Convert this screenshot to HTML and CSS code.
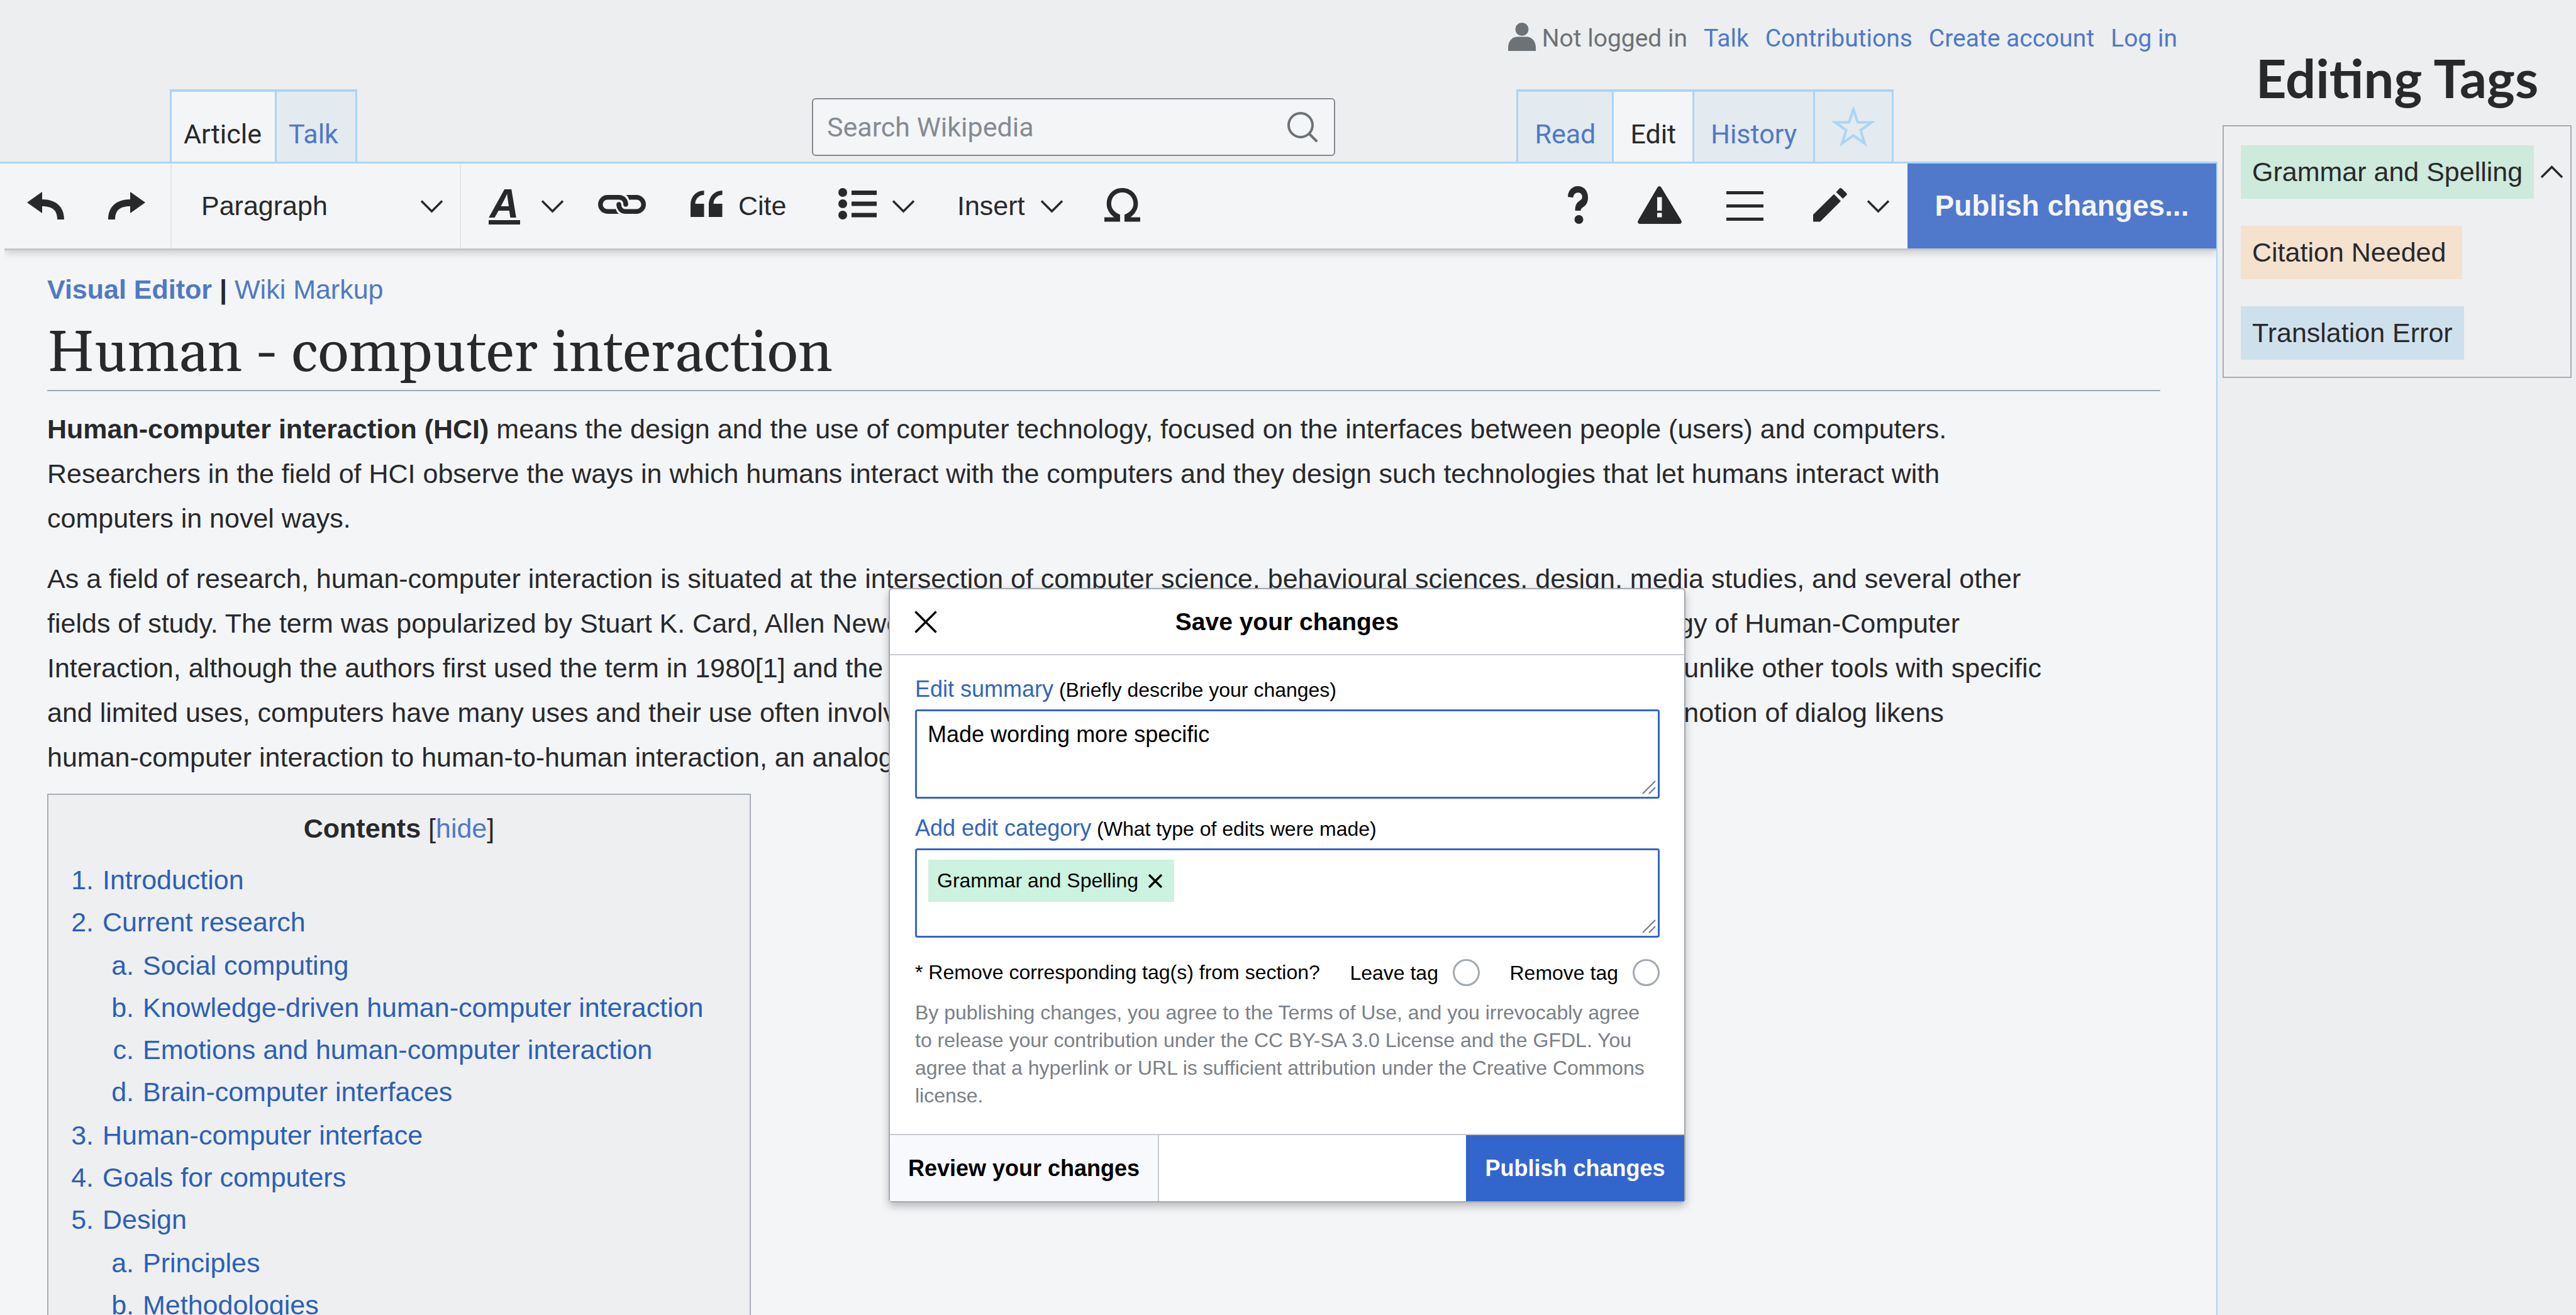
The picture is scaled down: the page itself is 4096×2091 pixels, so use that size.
FILE: index.html
```html
<!DOCTYPE html>
<html lang="en">
<head>
<meta charset="utf-8">
<title>Human - computer interaction</title>
<link rel="stylesheet" href="styles.css">
</head>
<body>
<svg width="0" height="0" class="sprite" aria-hidden="true">
  <symbol id="chevron" viewBox="0 0 35 64"><path d="M1 23.5L17.5 40L34 23.5" fill="none" stroke="currentColor" stroke-width="3.4"/></symbol>
  <symbol id="cross" viewBox="0 0 36 36"><path d="M1.5 1.5L34.500 34.500M34.500 1.500L1.500 34.500" fill="none" stroke="currentColor" stroke-width="3.4"/></symbol>
  <symbol id="grip" viewBox="0 0 22 22"><path d="M1 21L21 1M11 21L21 11" fill="none" stroke="#72777d" stroke-width="2"/></symbol>
</svg>

<div class="page">
  <div class="wiki">
    <header class="header">
      <nav class="user-nav" aria-label="Personal tools">
        <span class="user-state">
          <svg class="icon-user" width="44" height="50" viewBox="0 0 44 50" fill="currentColor"><ellipse cx="22" cy="10.500" rx="10.500" ry="10.500"/><path d="M0 45V40C0 31 5 23 14 22.500H30C39 23 44 31 44 40V45Z"/></svg>
          Not logged in
        </span>
        <a href="#">Talk</a>
        <a href="#">Contributions</a>
        <a href="#">Create account</a>
        <a href="#">Log in</a>
      </nav>
      <div class="tab-row">
        <nav class="tabs namespaces" aria-label="Namespaces">
          <a class="tab selected" href="#">Article</a>
          <a class="tab" href="#">Talk</a>
        </nav>
        <form class="search" role="search">
          <input type="search" aria-label="Search Wikipedia" placeholder="Search Wikipedia">
          <button type="button" aria-label="Search">
            <svg width="48" height="48" viewBox="0 0 48 48" fill="none" stroke="currentColor" stroke-width="4"><circle cx="21" cy="21" r="19"/><path d="M35 35L46 46" stroke-linecap="round"/></svg>
          </button>
        </form>
        <nav class="tabs views" aria-label="Views">
          <a class="tab" href="#">Read</a>
          <a class="tab selected" href="#">Edit</a>
          <a class="tab" href="#">History</a>
          <a class="tab star" href="#" aria-label="Watch">
            <svg width="68" height="64" viewBox="0 0 68 64"><path d="M34 5L41 25.500H63L45.500 38L52 59L34 46.500L16 59L22.500 38L5 25.500H27Z" fill="none" stroke="#abd5f3" stroke-width="4"/></svg>
          </a>
        </nav>
      </div>
    </header>

    <div class="workspace">
      <div class="toolbar" role="toolbar" aria-label="Editing">
        <div class="history">
          <button type="button" aria-label="Undo"><svg width="59" height="64" viewBox="0 0 59 64" fill="currentColor"><path d="M0 26L24 9V21C46 21 59 33 59 53H48C48 38 40 32 24 32V43Z"/></svg></button>
          <button type="button" aria-label="Redo"><svg width="59" height="64" viewBox="0 0 59 64" fill="currentColor"><path d="M59 26L35 9V21C13 21 0 33 0 53H11C11 38 19 32 35 32V43Z"/></svg></button>
        </div>
        <label class="format">
          <select aria-label="Paragraph format"><option>Paragraph</option><option>Heading</option></select>
          <svg width="35" height="64"><use href="#chevron"/></svg>
        </label>
        <div class="tools">
          <button type="button" class="text-style" aria-label="Text style"><span class="style-letter">A</span><svg width="35" height="64"><use href="#chevron"/></svg></button>
          <button type="button" aria-label="Link"><svg width="76" height="64" viewBox="0 0 76 64" fill="currentColor"><g fill="none" stroke="currentColor" stroke-width="7.400"><path d="M28 40.300H15A11.300 11.300 0 0 1 15 17.700H33C40 17.700 44 23 44 29"/><path d="M49.500 17.700H61A11.300 11.300 0 0 1 61 40.300H44C37 40.300 33 35 33 29"/></g><circle cx="44" cy="29" r="3.700"/><circle cx="33" cy="29" r="3.700"/><path d="M44.500 14H50.500V21.400H49.500Q48 16.500 44.500 14ZM27 36.600H28Q29.500 41.500 33 44H27Z"/></svg></button>
          <button type="button"><svg width="51" height="64" viewBox="0 0 51 64" fill="currentColor"><path d="M0 49V28A21.500 21.500 0 0 1 21.500 7V14A14 14 0 0 0 7.500 28H21.500V49ZM29 49V28A21.500 21.500 0 0 1 50.500 7V14A14 14 0 0 0 36.500 28H50.500V49Z"/></svg>Cite</button>
          <button type="button" aria-label="Lists"><svg width="61" height="64" viewBox="0 0 61 64" fill="currentColor"><circle cx="7" cy="10" r="7"/><circle cx="7" cy="28" r="7"/><circle cx="7" cy="46" r="7"/><path d="M21 7H61V14H21ZM21 24.500H61V31.500H21ZM21 42.500H61V49.500H21Z"/></svg><svg width="35" height="64"><use href="#chevron"/></svg></button>
          <button type="button">Insert<svg width="35" height="64"><use href="#chevron"/></svg></button>
          <button type="button" aria-label="Special character"><svg width="57" height="64" viewBox="0 0 57 64" fill="currentColor"><path d="M25 56.500H0V49.400H15.500C8 44 3.700 36.500 3.700 28C3.700 13.500 14.500 3 28.500 3S53.400 13.500 53.400 28C53.400 36.500 49 44 41.500 49.400H57V56.500H32V45.300C40.500 42 46.300 36 46.300 28C46.300 17.500 38.500 10 28.500 10S10.900 17.500 10.900 28C10.900 36 16.500 42 25 45.300Z"/></svg></button>
        </div>
        <div class="page-tools">
          <button type="button" aria-label="Help"><svg width="33" height="64" viewBox="0 0 33 64" fill="currentColor"><path d="M0 17C0 7 7 0 16 0C26 0 32 8 32 18C32 26 29 30 25 33C22 35 20.400 36 20.400 39H11.600C11.600 31 13 27 19 23C22 21 22.800 19.500 22.800 17C22.800 13 20 10.300 16 10.300C12 10.300 9 13 8.400 18.300Z"/><circle cx="17.500" cy="53" r="7"/></svg></button>
          <button type="button" aria-label="Notices"><svg width="70" height="64" viewBox="0 0 70 64" fill="currentColor" fill-rule="evenodd"><path d="M31.500 2Q34.500 -2 37.500 2L69.500 55Q71 60 66 60H4Q-1 60 .500 55ZM31 17.500V39H38.500V17.500ZM31 42.500V49.500H38.500V42.500Z"/></svg></button>
          <button type="button" aria-label="Page options"><svg width="59" height="64" viewBox="0 0 59 64" fill="currentColor"><path d="M0 8H59V13H0ZM0 29H59V34H0ZM0 50H59V55H0Z"/></svg></button>
          <button type="button" class="mode" aria-label="Editing mode"><svg width="54" height="64" viewBox="0 0 54 64" fill="currentColor"><path d="M0 56.500V45.300L33 12.700L44 23.700L11.200 56.500ZM36.600 9.400L41.500 4Q43.600 2 45.700 4L53 11Q54.500 12.700 53 14.500L47.300 20.100Z"/></svg><svg width="35" height="64"><use href="#chevron"/></svg></button>
        </div>
        <button type="button" class="publish">Publish changes...</button>
      </div>

      <main class="article">
        <p class="mode-switch"><a href="#"><b>Visual Editor</b></a> <b>|</b> <a href="#">Wiki Markup</a></p>
        <h1>Human - computer interaction</h1>
        <p><b>Human-computer interaction (HCI)</b> means the design and the use of computer technology, focused on the interfaces between people (users) and computers.<br>
        Researchers in the field of HCI observe the ways in which humans interact with the computers and they design such technologies that let humans interact with<br>
        computers in novel ways.</p>
        <p>As a field of research, human-computer interaction is situated at the intersection of computer science, behavioural sciences, design, media studies, and several other<br>
        fields of study. The term was popularized by Stuart K. Card, Allen Newell and Thomas P. Moran in their seminal 1983 book The Psychology of Human-Computer<br>
        Interaction, although the authors first used the term in 1980[1] and the first known published use was in 1975.[2] The term connotes that, unlike other tools with specific<br>
        and limited uses, computers have many uses and their use often involves an open-ended dialog between the user and its computer. The notion of dialog likens<br>
        human-computer interaction to human-to-human interaction, an analogy which is crucial to theoretical considerations.</p>

        <nav class="toc" aria-labelledby="toc-title">
          <p class="toc-title"><b id="toc-title">Contents</b> [<a href="#">hide</a>]</p>
          <ol>
            <li><a href="#">Introduction</a></li>
            <li><a href="#">Current research</a>
              <ol>
                <li><a href="#">Social computing</a></li>
                <li><a href="#">Knowledge-driven human-computer interaction</a></li>
                <li><a href="#">Emotions and human-computer interaction</a></li>
                <li><a href="#">Brain-computer interfaces</a></li>
              </ol>
            </li>
            <li><a href="#">Human-computer interface</a></li>
            <li><a href="#">Goals for computers</a></li>
            <li><a href="#">Design</a>
              <ol>
                <li><a href="#">Principles</a></li>
                <li><a href="#">Methodologies</a></li>
              </ol>
            </li>
          </ol>
        </nav>
      </main>
    </div>
  </div>

  <aside class="sidebar">
    <h2>Editing Tags</h2>
    <ul class="tag-list">
      <li><span class="tag green">Grammar and Spelling</span><button type="button" aria-label="Collapse"><svg class="up" width="35" height="64" viewBox="0 0 35 64"><path d="M1 40L17.500 23.500L34 40" fill="none" stroke="currentColor" stroke-width="3.400"/></svg></button></li>
      <li><span class="tag orange">Citation Needed</span></li>
      <li><span class="tag blue">Translation Error</span></li>
    </ul>
  </aside>
</div>

<form class="dialog" role="dialog" aria-labelledby="dialog-title">
  <header class="dialog-head">
    <button type="button" aria-label="Close"><svg width="36" height="36"><use href="#cross"/></svg></button>
    <h2 id="dialog-title">Save your changes</h2>
  </header>
  <div class="dialog-body">
    <label class="field-label" for="summary"><a href="#">Edit summary</a> (Briefly describe your changes)</label>
    <div class="field">
      <textarea id="summary">Made wording more specific</textarea>
      <svg class="grip" width="22" height="22"><use href="#grip"/></svg>
    </div>
    <label class="field-label" for="category"><a href="#">Add edit category</a> (What type of edits were made)</label>
    <div class="field chips">
      <span class="chip">Grammar and Spelling<button type="button" aria-label="Remove Grammar and Spelling"><svg width="24" height="24" viewBox="0 0 24 24"><path d="M2 2L22 22M22 2L2 22" fill="none" stroke="currentColor" stroke-width="3.500"/></svg></button></span>
      <input id="category" type="text">
      <svg class="grip" width="22" height="22"><use href="#grip"/></svg>
    </div>
    <div class="choices" role="radiogroup" aria-labelledby="choice-title">
      <span id="choice-title">* Remove corresponding tag(s) from section?</span>
      <label>Leave tag <input type="radio" name="tag"></label>
      <label>Remove tag <input type="radio" name="tag"></label>
    </div>
    <p class="legal">By publishing changes, you agree to the Terms of Use, and you irrevocably agree to release your contribution under the CC BY-SA 3.0 License and the GFDL. You agree that a hyperlink or URL is sufficient attribution under the Creative Commons license.</p>
  </div>
  <footer class="dialog-foot">
    <button type="button" class="review">Review your changes</button>
    <button type="submit" class="confirm">Publish changes</button>
  </footer>
</form>
</body>
</html>
```
FILE: styles.css
```css
* { box-sizing: border-box; }

html, body { height: 100%; }

body {
  margin: 0;
  overflow: hidden;
  background: #eceef0;
  color: #28292b;
  font: 43px/71px "Liberation Sans", Arial, sans-serif;
}

a { color: #4f79c5; text-decoration: none; }
p, h1, h2, ol, ul { margin: 0; padding: 0; }
svg { display: block; flex: none; }
.sprite { position: absolute; }

button {
  display: flex;
  align-items: center;
  padding: 0;
  border: 0;
  background: none;
  color: inherit;
  font: inherit;
}

.page { display: flex; min-height: 100%; }
.wiki { flex: 1; min-width: 0; display: flex; flex-direction: column; }

/* Header */
.header { padding-top: 36px; font-family: Roboto, sans-serif; }

.user-nav {
  display: flex;
  justify-content: flex-end;
  gap: 26px;
  padding-right: 64px;
  font-size: 39px;
  line-height: 50px;
}
.user-state { display: flex; gap: 10px; color: #6d7276; }

.tab-row {
  display: flex;
  height: 115px;
  margin-top: 56px;
  padding: 0 515px 0 270px;
}
.tabs {
  display: flex;
  border-top: 4px solid #abd5f3;
  border-left: 3px solid #abd5f3;
}
.tab {
  display: flex;
  align-items: flex-end;
  padding: 0 26px 19px;
  border-right: 3px solid #abd5f3;
  background: #e3eaf0;
  line-height: 50px;
}
.tab.selected { background: #f4f5f7; color: #28292b; }
.namespaces .tab { padding: 0 21px 19px 19px; }
.namespaces .tab:last-child { padding-right: 27px; }
.views { margin-left: auto; }
.tab.star { padding: 0 27px 24px; }

.search {
  display: flex;
  align-items: center;
  align-self: flex-end;
  width: 832px;
  height: 92px;
  margin: 0 0 9px 723px;
  padding: 0 26px 0 22px;
  border: 2px solid #83898f;
  border-radius: 6px;
  background: #f4f5f7;
  color: #6d7276;
}
.search input {
  flex: 1;
  min-width: 0;
  padding: 0;
  border: 0;
  outline: 0;
  background: none;
  font: inherit;
  line-height: 50px;
}
.search input::placeholder { color: #858b92; opacity: 1; }

/* Editing area */
.workspace {
  flex: 1;
  border-top: 3px solid #abd5f3;
  border-right: 2px solid #abd5f3;
  background: #f4f5f7;
}

.toolbar {
  display: flex;
  align-items: stretch;
  height: 135px;
  margin-left: 7px;
  box-shadow: 0 3px 0 #c4c6cb, 0 6px 14px rgba(0, 0, 0, .2);
  clip-path: inset(0 0 -30px 0);
}
.history { display: flex; gap: 70px; width: 264px; padding-left: 36px; }
.format {
  display: flex;
  align-items: center;
  width: 462px;
  padding: 0 27px 0 47px;
  border: solid #e3e5ea;
  border-width: 0 2px;
}
.format select {
  flex: 1;
  padding: 0;
  border: 0;
  outline: 0;
  appearance: none;
  background: none;
  color: inherit;
  font: inherit;
}
.tools {
  display: grid;
  grid-template-columns: 174px 147px 235px 189px 234px 57px;
  margin-left: 44px;
}
.tools button { gap: 25px; }
.tools .text-style { gap: 34px; }
.style-letter {
  width: 50px;
  border-bottom: 7px solid #28292b;
  font-size: 65px;
  font-weight: bold;
  font-style: italic;
  line-height: 52px;
}
.page-tools {
  display: grid;
  grid-template-columns: 111px 141px 138px 121px;
  margin: 0 29px 0 auto;
}
.mode { justify-content: space-between; }
.publish {
  justify-content: center;
  width: 491px;
  background: #5079cc;
  color: #f4f5f7;
  font-size: 46px;
  font-weight: bold;
}

.article { padding: 30px 89px 40px 75px; }
.article > p { margin-top: 25px; }
.article > .mode-switch { margin-top: 0; }
h1 {
  margin-top: 10px;
  border-bottom: 2px solid #a2a9b1;
  font: 92px/114px Gelasio, Georgia, "Liberation Serif", serif;
}

.toc {
  width: 1119px;
  margin-top: 22px;
  padding: 20px 40px 40px 84px;
  border: 2px solid #a9adb5;
  background: #eeeff1;
  line-height: 67px;
}
.toc-title { margin: 0 0 15px -44px; text-align: center; }
.toc li, .toc li a { color: #2b60b7; }
.toc li a { padding-left: 2px; }
.toc ol ol { margin: 2px 0; padding-left: 64px; list-style: lower-alpha; }

/* Sidebar */
.sidebar { width: 570px; padding: 72px 7px 0 8px; }
.sidebar h2 {
  margin-bottom: 25px;
  font: bold 85px/102px Lato, sans-serif;
  text-align: center;
}
.tag-list {
  display: grid;
  gap: 43px;
  padding: 30px 0 27px 27px;
  border: 2px solid #a5adb5;
  background: #eeeff1;
  list-style: none;
}
.tag-list li { display: flex; align-items: center; gap: 11px; }
.tag { min-width: 352px; padding: 0 18px; line-height: 85px; white-space: nowrap; }
.green { background: #cdeadc; }
.orange { background: #f4e1ce; }
.blue { background: #cfe0ed; }

/* Save dialog */
.dialog {
  position: absolute;
  top: 935px;
  left: calc(50% - 635px);
  width: 1267px;
  border: 2px solid #a2a9b1;
  border-radius: 6px;
  background: #fff;
  box-shadow: 0 6px 14px rgba(0, 0, 0, .25);
  color: #000;
  font-size: 32px;
}
.dialog a { color: #3366bb; }
.dialog-head {
  display: grid;
  grid-template-columns: 36px 1fr 36px;
  align-items: center;
  height: 105px;
  padding: 0 39px;
  border-bottom: 2px solid #c8ccd1;
}
.dialog-head h2 { font-size: 39px; line-height: 48px; text-align: center; }
.dialog-body { padding: 30px 39px 39px 40px; }
.field-label { display: block; line-height: 48px; }
.field-label a { font-size: 36px; }
.field {
  position: relative;
  height: 142px;
  margin: 7px 0 23px;
  border: 3px solid #3366cc;
  border-radius: 4px;
}
.field textarea {
  display: block;
  width: 100%;
  height: 100%;
  padding: 16px 17px;
  border: 0;
  outline: 0;
  resize: none;
  background: none;
  color: inherit;
  font: 36px/42px "Liberation Sans", Arial, sans-serif;
}
.grip { position: absolute; right: 3px; bottom: 4px; }
.chips { display: flex; align-items: flex-start; margin-bottom: 34px; padding: 15px 18px; }
.chip {
  display: flex;
  align-items: center;
  gap: 15px;
  padding: 0 18px 0 14px;
  background: #ccf2e0;
  line-height: 67px;
}
.chips input { flex: 1; min-width: 0; height: 67px; border: 0; outline: 0; background: none; font: inherit; }
.choices { display: flex; justify-content: space-between; line-height: 42px; }
.choices label { display: flex; align-items: center; gap: 23px; }
.choices input {
  width: 43px;
  height: 43px;
  margin: 0;
  appearance: none;
  border: 3px solid #a2a9b1;
  border-radius: 50%;
}
.legal { margin-top: 20px; color: #7b8086; line-height: 44px; }
.dialog-foot {
  display: flex;
  justify-content: space-between;
  height: 107px;
  border-top: 2px solid #c8ccd1;
  font-size: 36px;
}
.dialog-foot button { justify-content: center; font-weight: bold; }
.review { width: 428px; border-right: 2px solid #c8ccd1; background: #f8f9fc; }
.confirm { width: 347px; background: #3366cc; color: #fff; }
```
